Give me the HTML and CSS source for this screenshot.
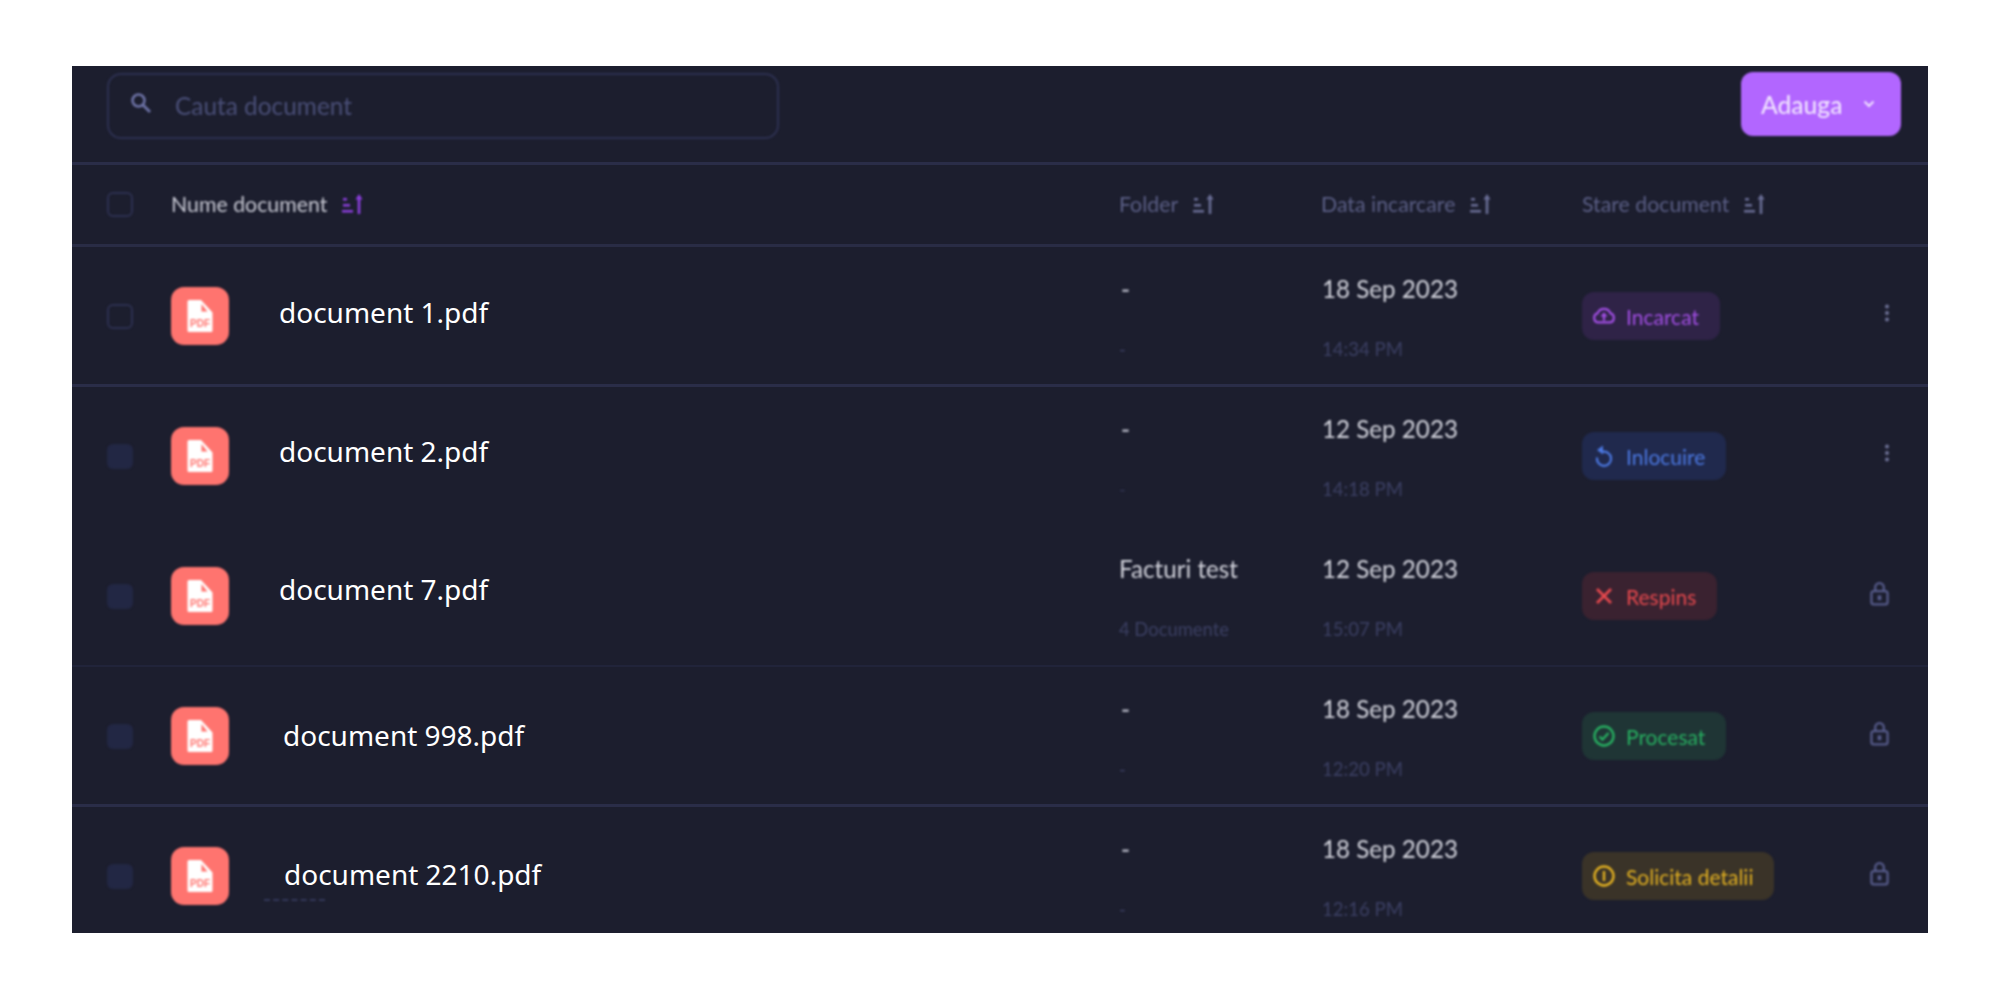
FILE: index.html
```html
<!DOCTYPE html>
<html lang="ro">
<head>
<meta charset="utf-8">
<title>Documente</title>
<link rel="stylesheet" href="styles.css">
</head>
<body>
<svg class="defs" width="0" height="0" aria-hidden="true">
  <symbol id="sort" viewBox="0 0 22 22">
    <path d="M2 5h4v2.400H2zM2 11h7v2.400H2zM1 17h11v2.400H1z" fill="currentColor"/>
    <path d="M18 21V5" stroke="currentColor" stroke-width="2.600" fill="none"/>
    <path d="M18 1l3.600 5.500h-7.200z" fill="currentColor"/>
  </symbol>
  <symbol id="lock" viewBox="0 0 20 26">
    <path d="M5.500 11V6.500a4.500 4.500 0 0 1 9 0V11" fill="none" stroke="currentColor" stroke-width="2.400"/>
    <rect x="1.500" y="10.500" width="17" height="14" rx="2.500" fill="none" stroke="currentColor" stroke-width="2.400"/>
    <rect x="8" y="15" width="4" height="5" fill="currentColor"/>
  </symbol>
  <symbol id="kebab" viewBox="0 0 6 18">
    <circle cx="3" cy="2.500" r="2" fill="currentColor"/>
    <circle cx="3" cy="9" r="2" fill="currentColor"/>
    <circle cx="3" cy="15.500" r="2" fill="currentColor"/>
  </symbol>
</svg>

<main class="frame">
  <header class="toolbar">
    <label class="search">
      <svg class="search-icon" viewBox="0 0 22 22"><circle cx="8.500" cy="8.500" r="6" fill="none" stroke="currentColor" stroke-width="2.600"/><path d="M13 13l7 7" stroke="currentColor" stroke-width="2.800" fill="none"/></svg>
      <span class="placeholder">Cauta document</span>
    </label>
    <button class="add" type="button">Adauga
      <svg class="chevron" viewBox="0 0 12 8"><path d="M1.500 1.500L6 6l4.500-4.500" fill="none" stroke="currentColor" stroke-width="2"/></svg>
    </button>
  </header>

  <div class="grid head">
    <span class="check check--line soft"></span>
    <span class="th th--main soft">Nume document <svg class="sort sort--on"><use href="#sort"/></svg></span>
    <span class="th soft">Folder <svg class="sort"><use href="#sort"/></svg></span>
    <span class="th soft">Data incarcare <svg class="sort"><use href="#sort"/></svg></span>
    <span class="th soft">Stare document <svg class="sort"><use href="#sort"/></svg></span>
  </div>

  <div class="grid row row--strong">
    <span class="check check--line soft"></span>
    <div class="doc">
      <svg class="pdf soft" viewBox="0 0 58 58"><rect width="58" height="58" rx="13" fill="#ff746f"/><path d="M16.500 21a1.500 1.500 0 0 1 1.500-1.500H30L41.500 32v18a1.500 1.500 0 0 1-1.500 1.500H18a1.500 1.500 0 0 1-1.500-1.500z" transform="translate(0 -6.500)" fill="#fff"/><path d="M30.500 17l6 7.500h-6z" fill="#ff746f"/><text x="29" y="39.500" text-anchor="middle" class="pdf-label">PDF</text></svg>
      <span class="name name--1">document 1.pdf</span>
    </div>
    <div class="stack stack--folder soft"><span class="main main--dash">-</span><span class="sub">-</span></div>
    <div class="stack soft"><span class="main">18 Sep 2023</span><span class="sub">14:34 PM</span></div>
    <div class="badge badge--purple soft">
      <svg class="badge-icon" viewBox="0 0 26 24"><path d="M7 19a5 5 0 0 1-1-9.800 7.500 7.500 0 0 1 14 0A5 5 0 0 1 19 19z" fill="none" stroke="currentColor" stroke-width="2.400"/><path d="M13 17v-6" stroke="currentColor" stroke-width="2.400" fill="none"/><path d="M9 12.500l4-4.500 4 4.500z" fill="currentColor"/></svg>
      Incarcat</div>
    <svg class="kebab soft"><use href="#kebab"/></svg>
  </div>

  <div class="grid row">
    <span class="check soft"></span>
    <div class="doc">
      <svg class="pdf soft" viewBox="0 0 58 58"><rect width="58" height="58" rx="13" fill="#ff746f"/><path d="M16.500 21a1.500 1.500 0 0 1 1.500-1.500H30L41.500 32v18a1.500 1.500 0 0 1-1.500 1.500H18a1.500 1.500 0 0 1-1.500-1.500z" transform="translate(0 -6.500)" fill="#fff"/><path d="M30.500 17l6 7.500h-6z" fill="#ff746f"/><text x="29" y="39.500" text-anchor="middle" class="pdf-label">PDF</text></svg>
      <span class="name name--2">document 2.pdf</span>
    </div>
    <div class="stack stack--folder soft"><span class="main main--dash">-</span><span class="sub sub--dim">-</span></div>
    <div class="stack soft"><span class="main">12 Sep 2023</span><span class="sub">14:18 PM</span></div>
    <div class="badge badge--blue soft">
      <svg class="badge-icon" viewBox="0 0 24 24"><path d="M9 5.800a8.300 8.300 0 1 1-6 6.500" fill="none" stroke="currentColor" stroke-width="2.600" transform="translate(2.500 3) scale(.85)"/><path d="M11 1.500v9L5 6z" fill="currentColor"/></svg>
      Inlocuire</div>
    <svg class="kebab soft"><use href="#kebab"/></svg>
  </div>

  <div class="grid row row--faint">
    <span class="check soft"></span>
    <div class="doc">
      <svg class="pdf soft" viewBox="0 0 58 58"><rect width="58" height="58" rx="13" fill="#ff746f"/><path d="M16.500 21a1.500 1.500 0 0 1 1.500-1.500H30L41.500 32v18a1.500 1.500 0 0 1-1.500 1.500H18a1.500 1.500 0 0 1-1.500-1.500z" transform="translate(0 -6.500)" fill="#fff"/><path d="M30.500 17l6 7.500h-6z" fill="#ff746f"/><text x="29" y="39.500" text-anchor="middle" class="pdf-label">PDF</text></svg>
      <span class="name name--3">document 7.pdf</span>
    </div>
    <div class="stack stack--folder soft"><span class="main">Facturi test</span><span class="sub">4 Documente</span></div>
    <div class="stack soft"><span class="main">12 Sep 2023</span><span class="sub">15:07 PM</span></div>
    <div class="badge badge--red soft">
      <svg class="badge-icon" viewBox="0 0 24 24"><path d="M5 5l14 14M19 5L5 19" fill="none" stroke="currentColor" stroke-width="2.800"/></svg>
      Respins</div>
    <svg class="lock soft"><use href="#lock"/></svg>
  </div>

  <div class="grid row row--strong">
    <span class="check soft"></span>
    <div class="doc">
      <svg class="pdf soft" viewBox="0 0 58 58"><rect width="58" height="58" rx="13" fill="#ff746f"/><path d="M16.500 21a1.500 1.500 0 0 1 1.500-1.500H30L41.500 32v18a1.500 1.500 0 0 1-1.500 1.500H18a1.500 1.500 0 0 1-1.500-1.500z" transform="translate(0 -6.500)" fill="#fff"/><path d="M30.500 17l6 7.500h-6z" fill="#ff746f"/><text x="29" y="39.500" text-anchor="middle" class="pdf-label">PDF</text></svg>
      <span class="name name--4">document 998.pdf</span>
    </div>
    <div class="stack stack--folder soft"><span class="main main--dash">-</span><span class="sub">-</span></div>
    <div class="stack soft"><span class="main">18 Sep 2023</span><span class="sub">12:20 PM</span></div>
    <div class="badge badge--green soft">
      <svg class="badge-icon" viewBox="0 0 24 24"><circle cx="12" cy="12" r="9.500" fill="none" stroke="currentColor" stroke-width="2.400"/><path d="M7.500 12.500l3 3 6-6.500" fill="none" stroke="currentColor" stroke-width="2.400"/></svg>
      Procesat</div>
    <svg class="lock soft"><use href="#lock"/></svg>
  </div>

  <div class="grid row">
    <span class="check soft"></span>
    <div class="doc">
      <svg class="pdf soft" viewBox="0 0 58 58"><rect width="58" height="58" rx="13" fill="#ff746f"/><path d="M16.500 21a1.500 1.500 0 0 1 1.500-1.500H30L41.500 32v18a1.500 1.500 0 0 1-1.500 1.500H18a1.500 1.500 0 0 1-1.500-1.500z" transform="translate(0 -6.500)" fill="#fff"/><path d="M30.500 17l6 7.500h-6z" fill="#ff746f"/><text x="29" y="39.500" text-anchor="middle" class="pdf-label">PDF</text></svg>
      <span class="name name--5">document 2210.pdf</span>
      <span class="remnant"></span>
    </div>
    <div class="stack stack--folder soft"><span class="main main--dash">-</span><span class="sub">-</span></div>
    <div class="stack soft"><span class="main">18 Sep 2023</span><span class="sub">12:16 PM</span></div>
    <div class="badge badge--yellow soft">
      <svg class="badge-icon" viewBox="0 0 24 24"><circle cx="12" cy="12" r="9.500" fill="none" stroke="currentColor" stroke-width="2.400"/><path d="M12 7v10" stroke="currentColor" stroke-width="2.400" fill="none"/></svg>
      Solicita detalii</div>
    <svg class="lock soft"><use href="#lock"/></svg>
  </div>
</main>
</body>
</html>
```
FILE: styles.css
```css
* { box-sizing: border-box; }
html, body { margin: 0; height: 100%; background: #fff; }
body { padding: 66px 72px; font-family: "Lato", "Liberation Sans", sans-serif; }
.defs { position: absolute; }
.soft { filter: blur(0.9px); }

.frame {
  width: 1856px;
  height: 867px;
  overflow: hidden;
  background: #1c1e2e;
}

.toolbar {
  height: 98px;
  padding: 6px 27px 0 35px;
  display: flex;
  justify-content: space-between;
  align-items: flex-start;
  box-shadow: inset 0 -2px 0 #2a2d48, 0 1px 0 #2a2d48;
}
.search {
  width: 672px;
  height: 66px;
  margin-top: 1px;
  padding-left: 21px;
  display: flex;
  align-items: center;
  gap: 23px;
  border: 2px solid #2d3050;
  border-radius: 14px;
  filter: blur(0.8px);
}
.search-icon { width: 22px; height: 22px; color: #6d72a5; margin-top: -6px; }
.placeholder { font-size: 24.4px; color: #4a4f78; margin-top: -2px; }
.add {
  width: 160px;
  height: 64px;
  padding: 0 0 0 20px;
  display: flex;
  align-items: center;
  gap: 21px;
  border: 0;
  border-radius: 12px;
  background: #b266ff;
  color: #f1e4ff;
  font: 500 24.6px "Lato", sans-serif;
  filter: blur(0.8px);
}
.chevron { width: 12px; height: 8px; }

.grid {
  display: grid;
  grid-template-columns: 64px 948px 202px 261px 288px 1fr;
  padding-left: 35px;
  align-items: center;
}
.head { height: 82px; padding-bottom: 2px; box-shadow: inset 0 -2px 0 #292c45, 0 1px 0 #292c45; }
.row { height: 140px; }
.row--strong { box-shadow: inset 0 -2px 0 #2a2d48, 0 1px 0 #2a2d48; }
.row--faint { box-shadow: inset 0 -1px 0 #21243a, 0 1px 0 #21243a; }

.check {
  width: 26px;
  height: 25px;
  border-radius: 6px;
  background: #222744;
}
.check--line { background: none; border: 2px solid #2d3050; }

.th {
  display: flex;
  align-items: center;
  gap: 14px;
  font-size: 21.3px;
  color: #5b5f86;
}
.th--main { color: #c8c9d4; }
.sort { width: 22px; height: 22px; color: #6a6e96; }
.sort--on { color: #8b3fdc; }

.doc { display: flex; align-items: center; position: relative; height: 100%; }
.pdf { width: 58px; height: 58px; flex: none; }
.pdf-label { font: 800 10px "Liberation Sans", sans-serif; fill: #ff746f; }
.name { font: 400 28px "Noto Sans", sans-serif; color: #fff; }
.name--1 { margin-left: 50px; padding-bottom: 8px; }
.name--2 { margin-left: 50px; padding-bottom: 10px; }
.name--3 { margin-left: 50px; padding-bottom: 14px; }
.name--4 { margin-left: 54px; padding-bottom: 2px; }
.name--5 { margin-left: 55px; padding-bottom: 4px; }
.remnant {
  position: absolute;
  left: 93px;
  top: 93px;
  width: 61px;
  border-top: 2px dashed #34385a;
  filter: blur(0.8px);
}

.stack {
  align-self: start;
  padding-top: 28px;
  display: flex;
  flex-direction: column;
  gap: 30px;
  line-height: 30px;
}
.main { font-size: 24.2px; color: #d2d3dc; margin-left: 1px; }
.main--dash { font-weight: 700; padding-left: 2px; color: #a9abb8; }
.sub { font-size: 18.6px; color: #3c4064; margin-left: 1px; }
.stack--folder .main, .stack--folder .sub { margin-left: 0; }
.stack--folder .sub { font-size: 18.4px; }
.sub--dim { opacity: .7; }

.badge {
  justify-self: start;
  height: 48px;
  padding: 0 21px 0 10px;
  display: flex;
  align-items: center;
  gap: 10px;
  border-radius: 12px;
  font-size: 21px;
}
.badge-icon { width: 24px; height: 24px; flex: none; }
.badge--purple { color: #a24ee4; background: #2f2347; }
.badge--blue { color: #4b78e2; background: #20294d; }
.badge--red { color: #e5484d; background: #3a2230; }
.badge--green { color: #27ae60; background: #1f3535; }
.badge--yellow { color: #e2b021; background: #3a3328; }

.kebab { width: 6px; height: 18px; color: #6f7398; margin: 0 0 6px 14px; }
.lock { width: 19px; height: 25px; color: #565b8a; margin-bottom: 6px; }
```
